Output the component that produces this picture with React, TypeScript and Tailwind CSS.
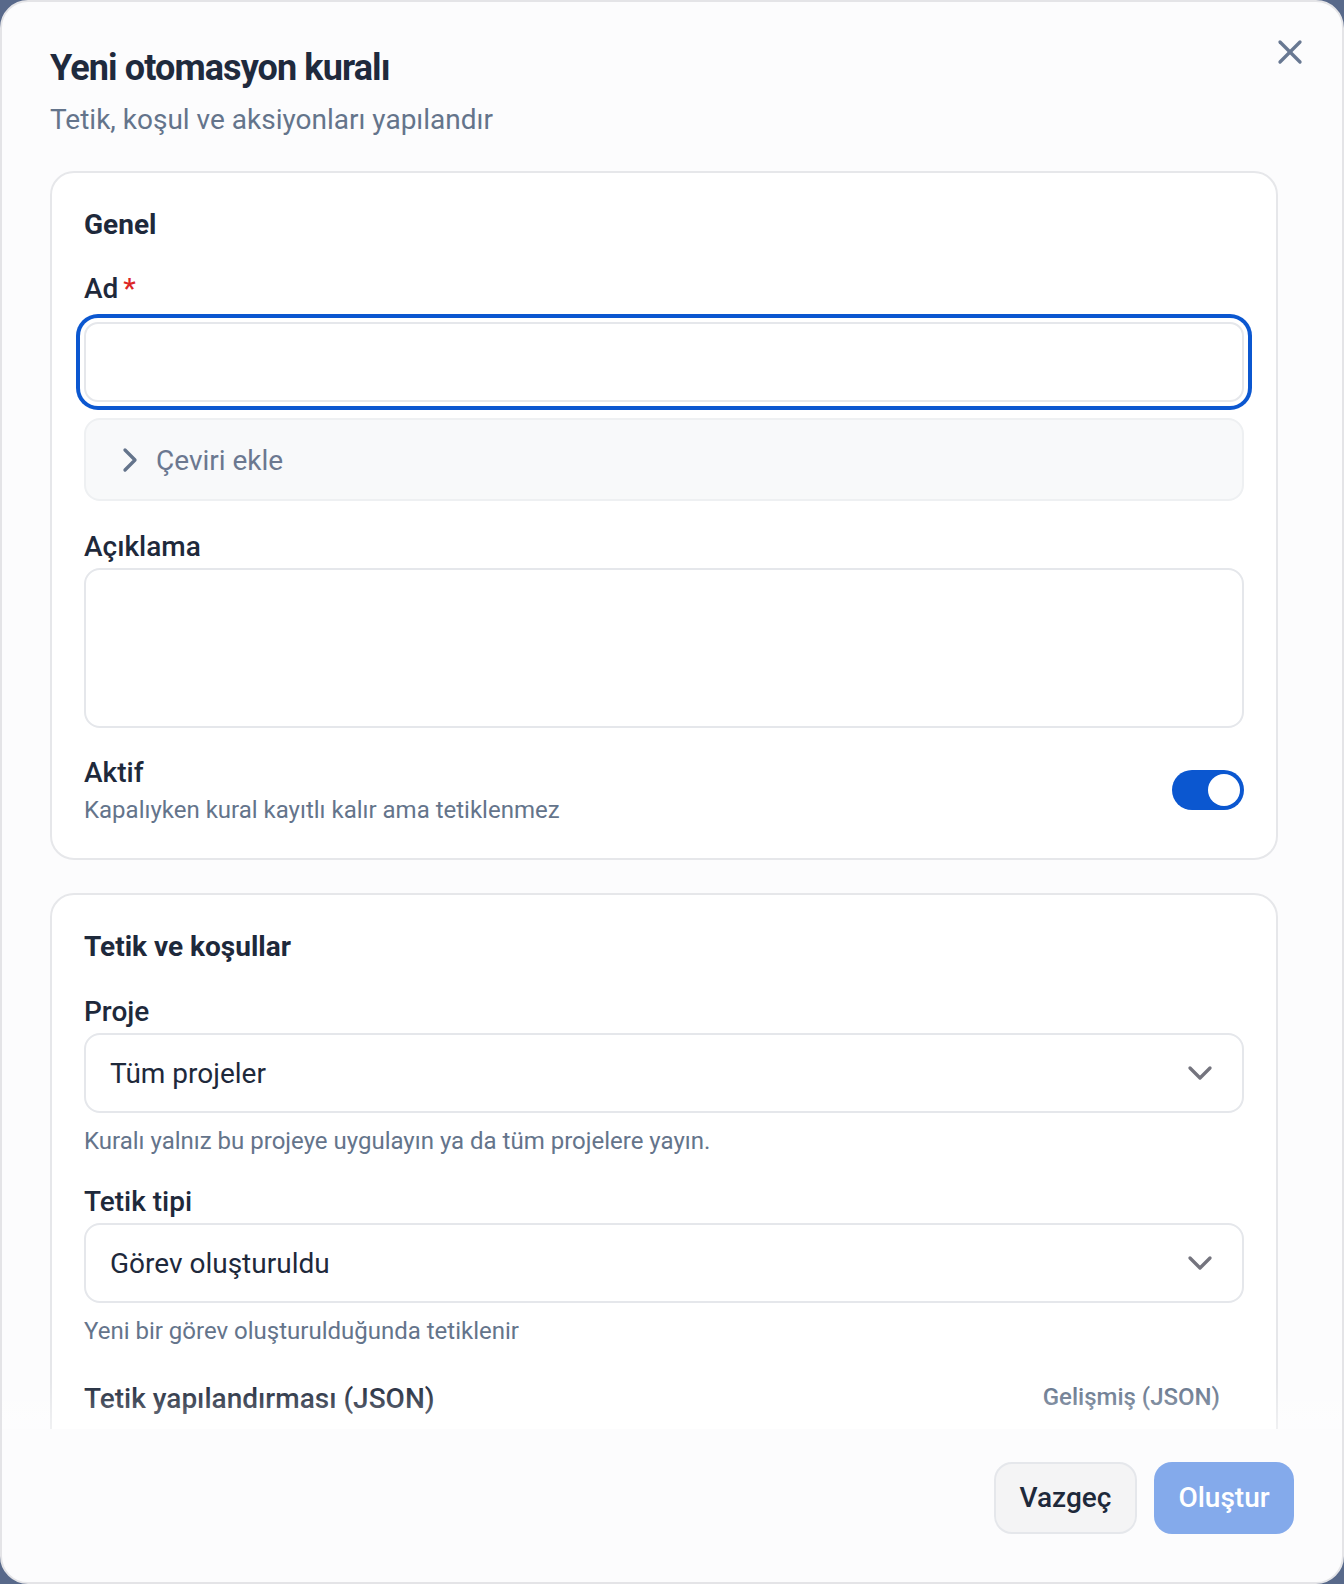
import React from "react";
import { ChevronRight, ChevronDown, X } from "lucide-react";

function Label({ children, className = "" }: { children: React.ReactNode; className?: string }) {
  return (
    <div className={`text-[28px] leading-[40px] font-medium text-[#1e293b] ${className}`}>{children}</div>
  );
}

function Select({ value, className = "" }: { value: string; className?: string }) {
  return (
    <div
      className={`h-[80px] w-full rounded-[16px] border-2 border-[#e5e7eb] bg-white pl-[24px] pr-[22px] flex items-center justify-between ${className}`}
    >
      <span className="text-[28px] leading-[40px] text-[#1e293b] translate-y-[1px]">{value}</span>
      <ChevronDown size={40} strokeWidth={2} className="text-[#74747e]" />
    </div>
  );
}

export default function App() {
  return (
    <div className="w-[1344px] h-[1584px] bg-[#58698a]" style={{ fontFamily: "Roboto, 'Noto Sans', sans-serif" }}>
      <div className="relative w-full h-full rounded-[28px] border-2 border-[#e4e4e7] bg-[#fcfcfd] flex flex-col overflow-hidden">
        {/* Close */}
        <button className="absolute top-[30px] right-[32px] w-[40px] h-[40px] flex items-center justify-center text-[#687892]">
          <X size={40} strokeWidth={2} />
        </button>

        {/* Header */}
        <div className="pt-[48px] px-[48px]">
          <h2 className="text-[36px] leading-[36px] font-bold tracking-tight text-[#1f2a3d]">Yeni otomasyon kuralı</h2>
          <p className="mt-[14px] text-[28px] leading-[40px] text-[#64748b]">Tetik, koşul ve aksiyonları yapılandır</p>
        </div>

        {/* Scroll area */}
        <div className="relative mt-[31px] flex-1 min-h-0 overflow-hidden pl-[48px] pr-[64px]">
          {/* Card 1 */}
          <section className="rounded-[24px] border-2 border-[#e6e7ea] bg-white p-[32px]">
            <h3 className="text-[28px] leading-[40px] font-bold text-[#1e293b]">Genel</h3>
            <Label className="mt-[24px] flex items-center">
              Ad<span className="ml-[5px] text-[#dc2626]">*</span>
            </Label>
            <div className="mt-[13px] h-[80px] w-full rounded-[14px] border-2 border-[#e5e7eb] bg-white ring-4 ring-[#0b57d0] ring-offset-4 ring-offset-white" />
            <div className="mt-[16px] h-[83px] w-full rounded-[16px] border-2 border-[#eef0f2] bg-[#f8f9fa] pl-[24px] flex items-center gap-[6px]">
              <ChevronRight size={40} strokeWidth={2} className="text-[#64748b]" />
              <span className="text-[28px] leading-[40px] text-[#6b7890] translate-y-[1px]">Çeviri ekle</span>
            </div>
            <Label className="mt-[26px]">Açıklama</Label>
            <div className="mt-[1px] h-[160px] w-full rounded-[16px] border-2 border-[#e5e7eb] bg-white" />
            <div className="mt-[25px] flex items-center justify-between">
              <div>
                <Label>Aktif</Label>
                <p className="mt-[1px] text-[24px] leading-[32px] text-[#64748b]">Kapalıyken kural kayıtlı kalır ama tetiklenmez</p>
              </div>
              <div className="w-[72px] h-[40px] rounded-full bg-[#0b57d0] p-[4px] flex justify-end">
                <div className="w-[32px] h-[32px] rounded-full bg-white" />
              </div>
            </div>
          </section>

          {/* Card 2 */}
          <section className="mt-[33px] rounded-[24px] border-2 border-[#e6e7ea] bg-white p-[32px]">
            <h3 className="text-[28px] leading-[40px] font-bold text-[#1e293b]">Tetik ve koşullar</h3>
            <Label className="mt-[25px]">Proje</Label>
            <Select className="mt-[1px]" value="Tüm projeler" />
            <p className="mt-[12px] text-[24px] leading-[32px] text-[#64748b]">Kuralı yalnız bu projeye uygulayın ya da tüm projelere yayın.</p>
            <Label className="mt-[25px]">Tetik tipi</Label>
            <Select className="mt-[1px]" value="Görev oluşturuldu" />
            <p className="mt-[12px] text-[24px] leading-[32px] text-[#64748b]">Yeni bir görev oluşturulduğunda tetiklenir</p>
            <div className="mt-[32px] h-[40px] flex items-center justify-between">
              <Label>Tetik yapılandırması (JSON)</Label>
              <button className="-mt-[4px] h-[40px] px-[24px] text-[24px] leading-[32px] font-medium text-[#64748b]">Gelişmiş (JSON)</button>
            </div>
            <div className="mt-[12px] h-[200px] w-full rounded-[16px] border-2 border-[#e5e7eb] bg-white" />
          </section>

          <div className="pointer-events-none absolute bottom-0 left-0 right-0 h-[48px] bg-linear-to-t from-white/40 to-transparent" />
        </div>

        {/* Footer */}
        <div className="pt-[33px] pb-[48px] px-[48px] flex justify-end gap-[17px]">
          <button className="h-[72px] w-[143px] rounded-[18px] border-2 border-[#e5e7eb] bg-[#f4f4f5] text-[28px] font-medium text-[#1e293b]">
            Vazgeç
          </button>
          <button className="h-[72px] w-[140px] rounded-[18px] bg-[#84aaeb] text-[28px] font-medium text-white">
            Oluştur
          </button>
        </div>
      </div>
    </div>
  );
}
